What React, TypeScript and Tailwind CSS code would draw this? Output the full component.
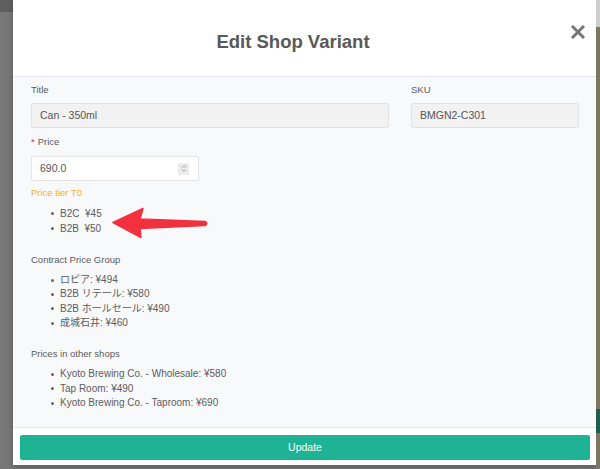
import React from 'react';

const font = { fontFamily: '"Liberation Sans", Arial, "Noto Sans CJK JP", sans-serif' };

const Bullets: React.FC<{ items: string[]; lh: string }> = ({ items, lh }) => (
  <ul className={`mt-[6px] text-[10px] text-[#5c5c5c] ${lh}`}>
    {items.map((t) => (
      <li key={t} className="flex items-center">
        <span className="ml-[20px] mr-[6px] w-[3px] h-[3px] rounded-full bg-[#666]" />
        <span>{t}</span>
      </li>
    ))}
  </ul>
);

const App: React.FC = () => {
  const tiers = ['B2C  ¥45', 'B2B  ¥50'];
  const contract = ['ロピア: ¥494', 'B2B リテール: ¥580', 'B2B ホールセール: ¥490', '成城石井: ¥460'];
  const others = ['Kyoto Brewing Co. - Wholesale: ¥580', 'Tap Room: ¥490', 'Kyoto Brewing Co. - Taproom: ¥690'];

  return (
    <div className="relative w-[600px] h-[469px] overflow-hidden bg-[#777777] flex" style={font}>
      {/* left backdrop */}
      <div className="w-[13px] flex flex-col">
        <div className="h-[12px] bg-[#5f5f5f]" />
        <div className="flex-1 bg-[#777777]" />
      </div>

      {/* modal */}
      <div className="w-[583px] h-[465px] bg-white flex flex-col shadow-[0_2px_6px_rgba(0,0,0,0.25)]">
        {/* header */}
        <div className="relative h-[77px] border-b border-[#e6e8eb] flex items-center justify-center pr-[23px] pt-[7px]">
          <h1 className="text-[18.5px] font-bold text-[#595959]">Edit Shop Variant</h1>
          <button className="absolute right-[11px] top-[25px] w-[14px] h-[14px] flex items-center justify-center">
            <svg viewBox="0 0 14 14" className="w-[14px] h-[14px]">
              <path d="M2 2 L12 12 M12 2 L2 12" stroke="#777777" strokeWidth="3" strokeLinecap="square" />
            </svg>
          </button>
        </div>

        {/* body */}
        <div className="flex-1 bg-[#f8f9fb] pl-[18px] pr-[16px] pt-[6px] text-[#5a5a5a]">
          <div className="flex gap-[22px]">
            <div className="w-[358px]">
              <div className="text-[9.5px] leading-[14px]">Title</div>
              <div className="mt-[6px] h-[25px] bg-[#f2f2f2] border border-[#e2e2e2] rounded-[2px] flex items-center pl-[8px] text-[10.5px] text-[#555]">
                Can - 350ml
              </div>
            </div>
            <div className="w-[168px]">
              <div className="text-[9.5px] leading-[14px]">SKU</div>
              <div className="mt-[6px] h-[25px] bg-[#f2f2f2] border border-[#e2e2e2] rounded-[2px] flex items-center pl-[8px] text-[10.5px] text-[#555]">
                BMGN2-C301
              </div>
            </div>
          </div>

          <div className="mt-[7px] text-[9.5px] leading-[14px]">
            <span className="text-[#e5262b] mr-[3px]">*</span>Price
          </div>
          <div className="mt-[7px] w-[168px] h-[25px] bg-white border border-[#e4e4e4] rounded-[2px] flex items-center justify-between pl-[8px] pr-[9px] text-[10.5px] text-[#555]">
            <span>690.0</span>
            <span className="w-[11px] h-[12px] bg-[#ececec] rounded-[1px] flex flex-col items-center justify-center gap-[1px]">
              <svg viewBox="0 0 8 4" className="w-[6px] h-[3px]">
                <path d="M1 3.5 L4 0.8 L7 3.5" fill="none" stroke="#8a8a8a" strokeWidth="1" />
              </svg>
              <svg viewBox="0 0 8 4" className="w-[6px] h-[3px]">
                <path d="M1 0.5 L4 3.2 L7 0.5" fill="none" stroke="#8a8a8a" strokeWidth="1" />
              </svg>
            </span>
          </div>

          <div className="mt-[5px] text-[9.5px] leading-[14px] text-[#f7b40f]">Price tier T0</div>
          <div className="whitespace-pre">
            <Bullets items={tiers} lh="leading-[15px]" />
          </div>

          <div className="mt-[17px] text-[9.5px] leading-[14px]">Contract Price Group</div>
          <Bullets items={contract} lh="leading-[14.3px]" />

          <div className="mt-[17px] text-[9.5px] leading-[14px]">Prices in other shops</div>
          <Bullets items={others} lh="leading-[14.5px]" />
        </div>

        {/* footer */}
        <div className="h-[38px] border-t border-[#e6e8eb] bg-white pl-[7px] pr-[6px] pt-[6px]">
          <button className="w-full h-[25px] rounded-[2px] bg-[#1db394] text-white text-[10.5px]">Update</button>
        </div>
      </div>

      {/* right backdrop */}
      <div className="w-[4px] flex flex-col">
        <div className="h-[27px] bg-[#cfcfcf]" />
        <div className="h-[382px] bg-[#7d775e]" />
        <div className="h-[24px] bg-[#1f5e4f]" />
        <div className="h-[32px] bg-[#7d775e]" />
        <div className="flex-1 bg-[#777777]" />
      </div>

      {/* annotation arrow */}
      <svg className="absolute left-0 top-0 pointer-events-none" width="600" height="469" viewBox="0 0 600 469">
        <path
          d="M113 222.5 L143 208.5 L140 219 L205 221.5 Q208.5 223.5 205 225.5 L140 228.5 L141 237.5 Z"
          fill="#f2313f"
          stroke="#f2313f"
          strokeWidth="1.5"
          strokeLinejoin="round"
        />
      </svg>
    </div>
  );
};

export default App;
